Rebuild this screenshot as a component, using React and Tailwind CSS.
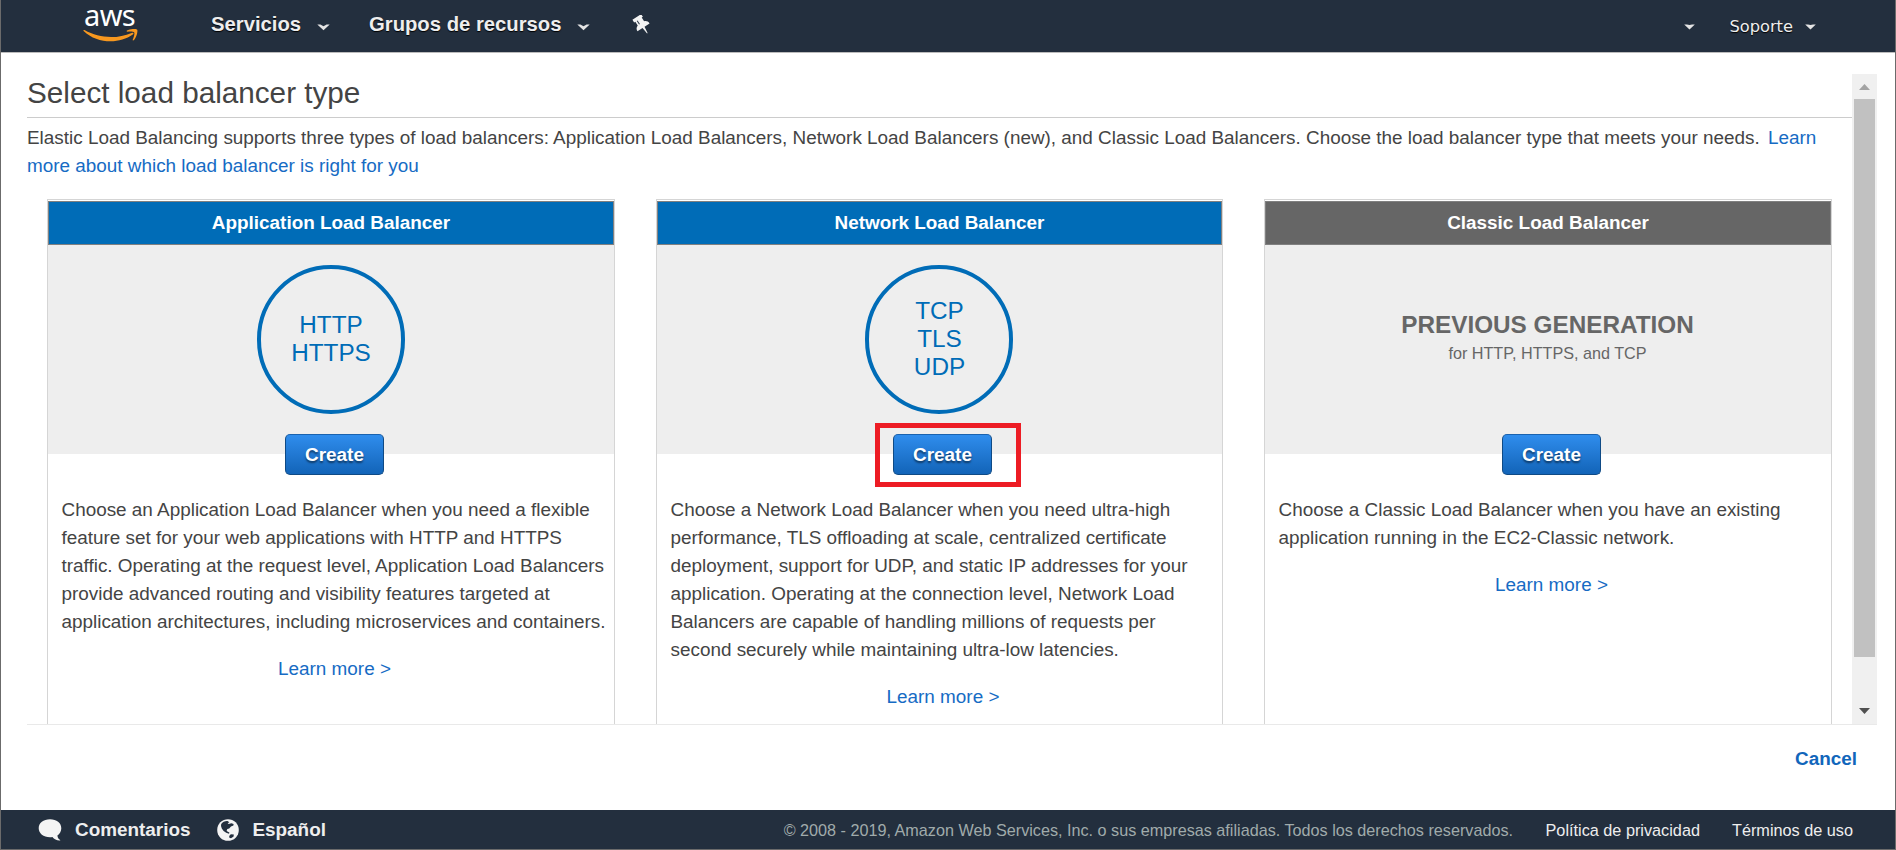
import React from "react";

const Caret = ({ className = "" }) => (
  <svg className={"h-[7px] w-[13px] shrink-0 " + className} viewBox="0 0 13 7" fill="#e4e4e4">
    <path d="M0.3 0.6 L3.4 0.6 L6.5 2.3 L9.6 0.6 L12.7 0.6 L6.5 6.3 Z" />
  </svg>
);

const SmallCaret = ({ className = "" }) => (
  <svg className={"h-[6px] w-[11px] shrink-0 " + className} viewBox="0 0 11 6" fill="#e4e4e4">
    <path d="M0.2 0.4 L3 0.4 L5.5 1 L8 0.4 L10.8 0.4 L5.5 5.6 Z" />
  </svg>
);

const Smile = () => (
  <svg className="h-[14px] w-[56px]" viewBox="0 0 56 14" fill="#f7981f">
    <path d="M0.6 1.9 C0 1.3 0.6 0.6 1.5 1.1 C16 9.4 34 10.2 48.6 3.9 C50.3 3.2 51.2 4.6 49.8 5.6 C36 15.4 14 14.8 0.6 1.9 Z" />
    <path d="M44 1.6 C47 -0.4 53.4 -0.4 54.2 0.7 C55 1.9 53.6 8.6 50.6 11.2 C50 11.7 49.4 11.4 49.7 10.7 C50.5 8.8 52 4.5 51.2 3.4 C50.4 2.3 46.4 2.6 44.4 2.7 C43.6 2.7 43.4 2.1 44 1.6 Z" />
  </svg>
);

const Pin = () => (
  <svg className="h-[20px] w-[20px]" viewBox="0 0 20 20">
    <g transform="rotate(-33 10 10)">
      <path
        fill="#f4f4f4"
        d="M4.8 0.4 H15.2 V3.6 H13.8 V8 C16 8.8 17.2 10.4 17.2 12.8 H11.2 L10.3 19.8 H9.7 L8.8 12.8 H2.8 C2.8 10.4 4 8.8 6.2 8 V3.6 H4.8 Z"
      />
      <path stroke="#232f3e" strokeWidth="1" d="M8.3 3.8 V8" />
    </g>
  </svg>
);

const Bubble = () => (
  <svg className="h-[22px] w-[24px]" viewBox="0 0 24 22" fill="#f4f4f4">
    <path d="M12 0.3 C18.6 0.3 23.3 4.1 23.3 9.2 C23.3 12.4 21.6 14.9 19.4 16.4 C19.6 18.3 20.6 20 22.2 20.9 C22.4 21.3 22.1 21.6 21.5 21.6 C18.6 21.5 16.1 20.2 14.4 18 C13.6 18.2 12.8 18.2 12 18.2 C5.4 18.2 0.7 14.3 0.7 9.2 C0.7 4.1 5.4 0.3 12 0.3 Z" />
  </svg>
);

const Globe = () => (
  <svg className="h-[22px] w-[22px]" viewBox="0 0 22 22">
    <circle cx="11" cy="11" r="10.8" fill="#f4f4f4" />
    <path
      fill="#232f3e"
      d="M4.2 5 C5.6 2.8 8.6 1.8 11 2.2 L12.4 3.4 L10.6 4 L11.6 5 L14.4 4.2 L16.6 5 L16.4 6.6 L14 7.6 L12.2 9.6 L10.4 10 L9.6 11.4 L10.4 12.6 L12.4 13.6 L12 14.8 L9.2 13.8 L6.6 12 L4.8 9.4 L4 7 Z"
    />
    <path fill="#232f3e" d="M12.2 17 L13.8 15.2 L16.8 15.6 L16.6 17.4 L14 19.2 L12.4 18.8 Z" />
  </svg>
);

const Circle = ({ lines }) => (
  <div className="flex h-[149px] w-[148px] items-center justify-center rounded-full border-4 border-[#006cb7] text-center text-[24.3px] leading-[28px] text-[#006cb7]">
    <div className="pb-0.5 pl-px">
      {lines.map((line) => (
        <div key={line}>{line}</div>
      ))}
    </div>
  </div>
);

const CreateButton = () => (
  <button className="h-[41px] w-[99px] rounded-[5px] border border-[#0f4a85] border-t-[#1a62ae] bg-linear-to-b from-[#2f8ded] to-[#1264b8] text-center font-bold text-white [text-shadow:0_2px_2px_rgba(0,0,0,0.5)]">
    Create
  </button>
);

function Card({ title, className, headerClass, badge, highlighted, text }) {
  return (
    <section className={"flex shrink-0 flex-col border border-b-0 border-[#d5d5d5] pt-px " + className}>
      <h2 className={"flex h-11 items-center justify-center border border-[#808080] font-bold text-white " + headerClass}>
        {title}
      </h2>
      <div className="flex h-[209px] flex-col items-center bg-[#eee] pt-5 pr-px">{badge}</div>
      <div className="-mt-5 flex flex-col items-center">
        <div className={"relative flex " + (highlighted ? "pl-[6px]" : "pl-[7px]")}>
          <CreateButton />
          {highlighted && (
            <div className="absolute -top-[11px] -left-[12px] h-16 w-[146px] border-5 border-[#ed1c24]" />
          )}
        </div>
        <p className="mt-[21px] w-full pr-1 pl-[13.5px]">{text}</p>
        <a className="mt-[19px] pl-[7px] text-[#166bc4]">Learn more &gt;</a>
      </div>
    </section>
  );
}

export default function App() {
  return (
    <div className="flex h-[850px] w-[1896px] flex-col overflow-hidden border-x border-b border-[#6b6b6b] bg-white font-['Liberation_Sans',Arial,sans-serif] text-[18.9px] leading-[28px] text-[#444]">
      <nav className="flex h-[53px] shrink-0 border-b border-[#bcbcbc] bg-[#232f3e] text-[#eee]">
        <div className="flex w-[210px] flex-col pl-[82px]">
          <div className="h-[29px] pl-px font-['Noto_Sans',sans-serif] text-[29px] leading-[30px] tracking-[-0.6px] text-white">
            aws
          </div>
          <Smile />
        </div>
        <div className="flex h-12 w-[158px] items-center text-[20.25px] font-bold [text-shadow:0_1px_1px_#000]">
          Servicios
          <Caret className="mt-1.5 ml-4" />
        </div>
        <div className="flex h-12 w-[263px] items-center text-[20.25px] font-bold [text-shadow:0_1px_1px_#000]">
          Grupos de recursos
          <Caret className="mt-1.5 ml-4" />
        </div>
        <div className="pt-[15px]">
          <Pin />
        </div>
        <div className="mr-[79px] ml-auto flex h-[53px] items-center font-['DejaVu_Sans',sans-serif] text-[16.25px] [text-shadow:0_1px_1px_#000]">
          <SmallCaret className="mr-[34px]" />
          Soporte
          <SmallCaret className="ml-[12px]" />
        </div>
      </nav>

      <main className="flex h-[672px] shrink-0 pt-[21px] pr-[18px] pl-[26px]">
        <div className="flex flex-1 border-b border-[#e9e9e9]">
          <div className="flex w-[1825px] shrink-0 flex-col overflow-hidden">
            <h1 className="h-11 shrink-0 border-b border-[#ccc] pt-0.5 text-[29.7px] leading-[34px]">
              Select load balancer type
            </h1>
            <p className="mt-1.5 w-[1800px] shrink-0">
              Elastic Load Balancing supports three types of load balancers: Application Load Balancers, Network Load
              Balancers (new), and Classic Load Balancers. Choose the load balancer type that meets your needs.{" "}
              <a className="ml-[3px] text-[#166bc4]">Learn more about which load balancer is right for you</a>
            </p>
            <div className="mt-[19px] ml-5 flex flex-1 gap-[41px]">
              <Card
                title="Application Load Balancer"
                className="w-[568px]"
                headerClass="bg-[#006cb7]"
                badge={<Circle lines={["HTTP", "HTTPS"]} />}
                text="Choose an Application Load Balancer when you need a flexible feature set for your web applications with HTTP and HTTPS traffic. Operating at the request level, Application Load Balancers provide advanced routing and visibility features targeted at application architectures, including microservices and containers."
              />
              <Card
                title="Network Load Balancer"
                className="w-[567px]"
                headerClass="bg-[#006cb7]"
                badge={<Circle lines={["TCP", "TLS", "UDP"]} />}
                highlighted
                text="Choose a Network Load Balancer when you need ultra-high performance, TLS offloading at scale, centralized certificate deployment, support for UDP, and static IP addresses for your application. Operating at the connection level, Network Load Balancers are capable of handling millions of requests per second securely while maintaining ultra-low latencies."
              />
              <Card
                title="Classic Load Balancer"
                className="w-[568px]"
                headerClass="bg-[#666]"
                badge={
                  <div className="flex flex-col items-center pt-[46px] text-[#666]">
                    <div className="text-[24.3px] font-bold">PREVIOUS GENERATION</div>
                    <div className="text-[16.2px]">for HTTP, HTTPS, and TCP</div>
                  </div>
                }
                text="Choose a Classic Load Balancer when you have an existing application running in the EC2-Classic network."
              />
            </div>
          </div>
          <div className="flex w-[25px] shrink-0 flex-col items-center bg-[#f0f0f0]">
            <svg className="h-[25px] w-[25px] shrink-0" viewBox="0 0 25 25">
              <path fill="#a3a3a3" d="M12.5 10 L18 16 H7 Z" />
            </svg>
            <div className="h-[558px] w-[21px] bg-[#c1c1c1]" />
            <svg className="mt-auto h-[25px] w-[25px] shrink-0" viewBox="0 0 25 25">
              <path fill="#505050" d="M7 9 H18 L12.5 15 Z" />
            </svg>
          </div>
        </div>
      </main>

      <div className="flex flex-1 justify-end pt-5 pr-[38px] font-bold text-[#1166bb]">Cancel</div>

      <footer className="flex h-[39px] shrink-0 items-center bg-[#232f3e] pl-[37px] text-[#eee]">
        <Bubble />
        <span className="ml-[13px] font-bold">Comentarios</span>
        <span className="ml-[27px]">
          <Globe />
        </span>
        <span className="ml-[13px] font-bold">Español</span>
        <div className="mr-[42px] ml-auto flex text-[16.25px]">
          <span className="text-[16.21px] text-[#a0abab]">
            © 2008 - 2019, Amazon Web Services, Inc. o sus empresas afiliadas. Todos los derechos reservados.
          </span>
          <span className="ml-[32.5px]">Política de privacidad</span>
          <span className="ml-8">Términos de uso</span>
        </div>
      </footer>
    </div>
  );
}
